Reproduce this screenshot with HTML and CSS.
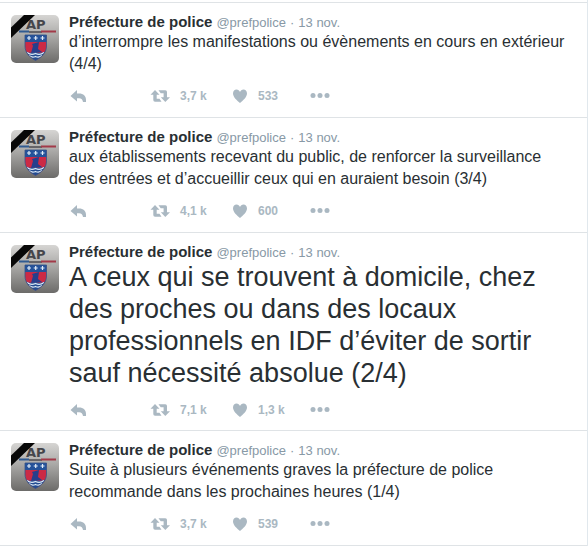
FILE: index.html
```html
<!DOCTYPE html>
<html lang="fr">
<head>
<meta charset="utf-8">
<title>Préfecture de police</title>
<link rel="stylesheet" href="styles.css">
</head>
<body>
<svg class="sprite" aria-hidden="true">
  <defs>
    <linearGradient id="steel" x1="0" y1="0" x2="0" y2="1">
      <stop offset="0" stop-color="#d6d5d3"/>
      <stop offset=".45" stop-color="#a9a8a6"/>
      <stop offset="1" stop-color="#6c6b69"/>
    </linearGradient>
    <clipPath id="shield"><path d="M14 20H35.500V31C35.500 38 30 42.500 24.500 45.500C19 42.500 14 38 14 31Z"/></clipPath>
  </defs>
  <symbol id="avatar" viewBox="0 0 48 48">
    <rect width="48" height="48" fill="url(#steel)"/>
    <text class="crest-text" x="15" y="14" fill="#45464b">AP</text>
    <path d="M8 16.500H18" stroke="#315b91" stroke-width="2"/>
    <path d="M18 17H31" stroke="#4c4b50" stroke-width="1.500"/>
    <path d="M30 16.500H45" stroke="#a23a49" stroke-width="2"/>
    <g clip-path="url(#shield)">
      <rect x="13" y="19" width="23" height="28" fill="#cc2a45"/>
      <rect x="13" y="19" width="23" height="8" fill="#24529a"/>
      <path d="M21 29L28 27L27 34L31 37L20 38L22 31Z" fill="#273e8c"/>
      <path d="M13 36Q19 39 24.500 37Q30 39 36 36V47H13Z" fill="#234c91"/>
      <path d="M16 37.500Q20 40.500 24.500 38.500Q29 40.500 33 37.500M18 40.500Q21 43 24.500 41.500Q28 43 31 40.500" fill="none" stroke="#dce8f5" stroke-width="1.300"/>
      <path d="M18 21V25M16 23H20M24.700 21V25M22.700 23H26.700M31.500 21V25M29.500 23H33.500" stroke="#e3edf7" stroke-width="1.200"/>
    </g>
    <path d="M14 20H35.500V31C35.500 38 30 42.500 24.500 45.500C19 42.500 14 38 14 31Z" fill="none" stroke="#35548b" stroke-width=".8"/>
    <path d="M0 12.500L13 0H24L0 23Z" fill="#080808"/>
  </symbol>
  <symbol id="reply" viewBox="0 0 18 16">
    <path d="M8 2V5.500H10C14.500 5.500 17 8 17 12V14H14C13.700 11.500 12.500 10.200 10 10.200H8V13.500L1.500 8Z"/>
  </symbol>
  <symbol id="retweet" viewBox="0 0 20 16">
    <path d="M5 2L9.500 6.800H6.700V10.700H9.500L11.500 13.700H5Q3.300 13.700 3.300 12V6.800H0.500ZM8.500 2.300H15.300Q17 2.300 17 4V9.200H20L15.300 14L10.800 9.200H13.600V5.300H10.700Z"/>
  </symbol>
  <symbol id="heart" viewBox="0 0 16 16">
    <path d="M8 15C5 12.500 1 9 1 5.500C1 2.800 2.700 1.500 4.500 1.500C6.200 1.500 7.400 2.400 8 4C8.600 2.400 9.800 1.500 11.500 1.500C13.300 1.500 15 2.800 15 5.500C15 9 11 12.500 8 15Z"/>
  </symbol>
  <symbol id="more" viewBox="0 0 20 16">
    <circle cx="3" cy="7.500" r="2.500"/><circle cx="10" cy="7.500" r="2.500"/><circle cx="17" cy="7.500" r="2.500"/>
  </symbol>
</svg>
<main class="timeline">
  <article class="tweet">
    <svg class="avatar" role="img" aria-label="Préfecture de police"><use href="#avatar"/></svg>
    <div class="content">
      <header class="meta"><a class="name" href="#">Préfecture de police</a><a class="handle" href="#">@prefpolice</a><span>·</span><a class="date" href="#">13 nov.</a></header>
      <p class="text">d’interrompre les manifestations ou évènements en cours en extérieur (4/4)</p>
      <div class="actions">
        <button class="reply" aria-label="Répondre"><svg class="icon"><use href="#reply"/></svg></button>
        <button class="retweet" aria-label="Retweeter"><svg class="icon wide"><use href="#retweet"/></svg><span>3,7 k</span></button>
        <button class="like" aria-label="Aimer"><svg class="icon small"><use href="#heart"/></svg><span>533</span></button>
        <button class="more" aria-label="Plus"><svg class="icon wide"><use href="#more"/></svg></button>
      </div>
    </div>
  </article>
  <article class="tweet">
    <svg class="avatar" role="img" aria-label="Préfecture de police"><use href="#avatar"/></svg>
    <div class="content">
      <header class="meta"><a class="name" href="#">Préfecture de police</a><a class="handle" href="#">@prefpolice</a><span>·</span><a class="date" href="#">13 nov.</a></header>
      <p class="text">aux établissements recevant du public, de renforcer la surveillance des entrées et d’accueillir ceux qui en auraient besoin (3/4)</p>
      <div class="actions">
        <button class="reply" aria-label="Répondre"><svg class="icon"><use href="#reply"/></svg></button>
        <button class="retweet" aria-label="Retweeter"><svg class="icon wide"><use href="#retweet"/></svg><span>4,1 k</span></button>
        <button class="like" aria-label="Aimer"><svg class="icon small"><use href="#heart"/></svg><span>600</span></button>
        <button class="more" aria-label="Plus"><svg class="icon wide"><use href="#more"/></svg></button>
      </div>
    </div>
  </article>
  <article class="tweet featured">
    <svg class="avatar" role="img" aria-label="Préfecture de police"><use href="#avatar"/></svg>
    <div class="content">
      <header class="meta"><a class="name" href="#">Préfecture de police</a><a class="handle" href="#">@prefpolice</a><span>·</span><a class="date" href="#">13 nov.</a></header>
      <p class="text">A ceux qui se trouvent à domicile, chez des proches ou dans des locaux professionnels en IDF d’éviter de sortir sauf nécessité absolue (2/4)</p>
      <div class="actions">
        <button class="reply" aria-label="Répondre"><svg class="icon"><use href="#reply"/></svg></button>
        <button class="retweet" aria-label="Retweeter"><svg class="icon wide"><use href="#retweet"/></svg><span>7,1 k</span></button>
        <button class="like" aria-label="Aimer"><svg class="icon small"><use href="#heart"/></svg><span>1,3 k</span></button>
        <button class="more" aria-label="Plus"><svg class="icon wide"><use href="#more"/></svg></button>
      </div>
    </div>
  </article>
  <article class="tweet">
    <svg class="avatar" role="img" aria-label="Préfecture de police"><use href="#avatar"/></svg>
    <div class="content">
      <header class="meta"><a class="name" href="#">Préfecture de police</a><a class="handle" href="#">@prefpolice</a><span>·</span><a class="date" href="#">13 nov.</a></header>
      <p class="text">Suite à plusieurs événements graves la préfecture de police recommande dans les prochaines heures (1/4)</p>
      <div class="actions">
        <button class="reply" aria-label="Répondre"><svg class="icon"><use href="#reply"/></svg></button>
        <button class="retweet" aria-label="Retweeter"><svg class="icon wide"><use href="#retweet"/></svg><span>3,7 k</span></button>
        <button class="like" aria-label="Aimer"><svg class="icon small"><use href="#heart"/></svg><span>539</span></button>
        <button class="more" aria-label="Plus"><svg class="icon wide"><use href="#more"/></svg></button>
      </div>
    </div>
  </article>
</main>
</body>
</html>
```
FILE: styles.css
```css
* { box-sizing: border-box; }
body {
  margin: 0;
  background: #fff;
  color: #292f33;
  font-family: "Liberation Sans", Arial, sans-serif;
}
.sprite { position: absolute; width: 0; height: 0; }
.timeline {
  padding-top: 2px;
  border-right: 1px solid #e1e8ed;
}
.tweet {
  display: flex;
  gap: 10px;
  padding: 10px 20px 9px 11px;
  border-top: 1px solid #dfe3e6;
}
.tweet:last-child { border-bottom: 1px solid #dfe3e6; }
.avatar {
  flex: none;
  width: 48px;
  height: 48px;
  margin-top: 2px;
  border-radius: 5px;
}
.crest-text { font: bold 13px "DejaVu Sans", sans-serif; }
.content { flex: 1; min-width: 0; }
.meta {
  display: flex;
  gap: 4px;
  align-items: baseline;
  height: 18px;
  line-height: 18px;
  font-size: 13px;
  color: #8899a6;
}
.meta a { color: inherit; text-decoration: none; }
.meta .name { color: #292f33; font-size: 15px; font-weight: bold; }
.text { margin: 0; font-size: 16px; line-height: 22px; }
.featured .text { font-size: 27px; line-height: 32px; }
.featured { padding-bottom: 8px; }
.actions {
  display: grid;
  grid-template-columns: 81px 82px 78px 30px;
  height: 24px;
  margin-top: 9px;
}
.actions button {
  display: flex;
  align-items: center;
  gap: 10px;
  padding: 0;
  border: 0;
  background: none;
  color: #aab8c2;
  font: bold 12px/24px "Liberation Sans", Arial, sans-serif;
}
.icon { flex: none; width: 18px; height: 16px; fill: currentColor; }
.icon.wide { width: 20px; }
.icon.small { width: 16px; }
```
